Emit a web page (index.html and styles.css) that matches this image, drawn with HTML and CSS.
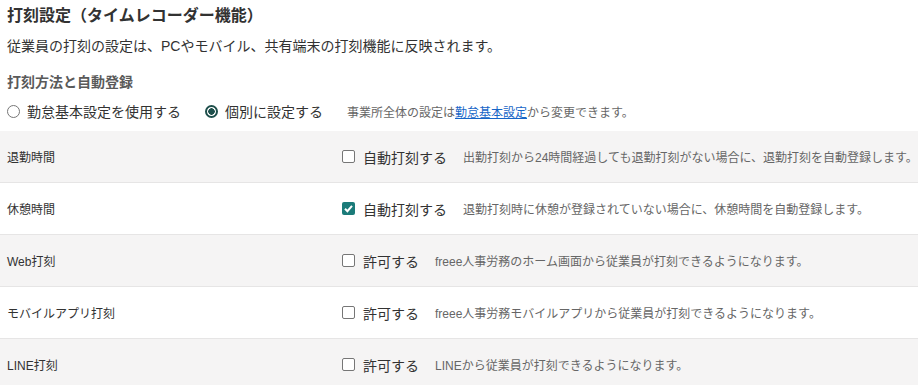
FILE: index.html
```html
<!DOCTYPE html>
<html lang="ja">
<head>
    <meta charset="UTF-8">
    <title>打刻設定</title>
    <link rel="stylesheet" href="styles.css">
</head>
<body>

    <h2 class="title">打刻設定（タイムレコーダー機能）</h2>
    <p class="lead">従業員の打刻の設定は、PCやモバイル、共有端末の打刻機能に反映されます。</p>

    <h3 class="sub">打刻方法と自動登録</h3>
    <div class="radios">
        <label class="radio"><span class="circle"></span>勤怠基本設定を使用する</label>
        <label class="radio"><span class="circle on"></span>個別に設定する</label>
        <span class="hint">事業所全体の設定は<a href="#">勤怠基本設定</a>から変更できます。</span>
    </div>

    <div class="rows">
        <div class="row gray">
            <div class="name">退勤時間</div>
            <label class="check"><span class="box"></span>自動打刻する</label>
            <span class="desc">出勤打刻から24時間経過しても退勤打刻がない場合に、退勤打刻を自動登録します。</span>
        </div>
        <div class="row">
            <div class="name">休憩時間</div>
            <label class="check"><span class="box on">
                <svg width="13" height="13" viewBox="0 0 13 13"><path d="M3 6.8 L5.4 9.2 L10 3.9" fill="none" stroke="#fff" stroke-width="2"/></svg>
            </span>自動打刻する</label>
            <span class="desc">退勤打刻時に休憩が登録されていない場合に、休憩時間を自動登録します。</span>
        </div>
        <div class="row gray">
            <div class="name">Web打刻</div>
            <label class="check"><span class="box"></span>許可する</label>
            <span class="desc">freee人事労務のホーム画面から従業員が打刻できるようになります。</span>
        </div>
        <div class="row">
            <div class="name">モバイルアプリ打刻</div>
            <label class="check"><span class="box"></span>許可する</label>
            <span class="desc">freee人事労務モバイルアプリから従業員が打刻できるようになります。</span>
        </div>
        <div class="row gray">
            <div class="name">LINE打刻</div>
            <label class="check"><span class="box"></span>許可する</label>
            <span class="desc">LINEから従業員が打刻できるようになります。</span>
        </div>
    </div>

</body>
</html>
```

FILE: styles.css
```css
* { box-sizing: border-box; }

body {
    margin: 0;
    font-family: "Liberation Sans", "Noto Sans CJK JP", sans-serif;
    color: #323232;
    background: #fff;
}

.title {
    margin: 4px 7px 0;
    font-size: 16px;
    line-height: 24px;
    font-weight: bold;
}

.lead {
    margin: 8px 7px 0;
    font-size: 14px;
    line-height: 20px;
}

.sub {
    margin: 16px 7px 0;
    font-size: 14px;
    line-height: 20px;
    font-weight: bold;
    color: #5a5a5a;
}

.radios {
    display: flex;
    align-items: center;
    margin: 9px 7px 0;
    height: 20px;
    font-size: 14px;
}

.radio { display: flex; align-items: center; margin-right: 24px; }

.circle {
    width: 13px; height: 13px;
    border: 1px solid #767676;
    border-radius: 50%;
    margin-right: 7px;
    background: #fff;
}
.circle.on {
    border: 2px solid #1e4f4b;
    background: radial-gradient(circle, #1e4f4b 0 3px, #fff 3.5px);
}

.hint { font-size: 12px; color: #666; }
.hint a { color: #1665c7; }

.rows { margin-top: 10px; }

.row {
    display: flex;
    align-items: center;
    height: 52px;
    border-bottom: 1px solid #e6e5e5;
    font-size: 12px;
}
.row.gray { background: #f5f4f4; }

.name { width: 342px; padding-left: 7px; }

.check { display: flex; align-items: center; font-size: 14px; }

.box {
    width: 13px; height: 13px;
    border: 1px solid #767676;
    border-radius: 2px;
    margin-right: 8px;
    background: #fff;
}
.box.on { border: none; background: #1b7b79; }
.box svg { display: block; }

.desc { margin-left: 16px; color: #666; }
```
